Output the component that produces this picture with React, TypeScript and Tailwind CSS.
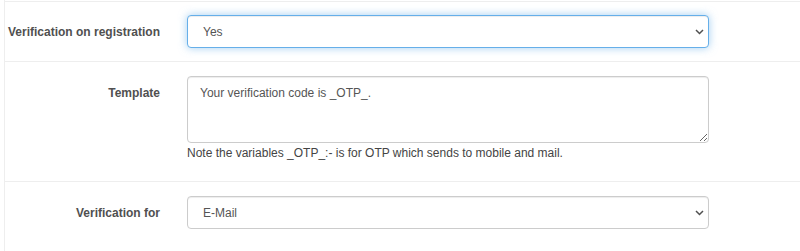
import React from 'react';

const font = { fontFamily: '"Liberation Sans", Arial, sans-serif' };

function Chevron() {
  return (
    <svg
      className="pointer-events-none absolute right-[5px] top-1/2 -translate-y-1/2"
      width="9"
      height="6"
      viewBox="0 0 9 6"
    >
      <polyline points="1,1 4.5,4.5 8,1" fill="none" stroke="#505050" strokeWidth="1.5" />
    </svg>
  );
}

function SelectBox({ value, focused }: { value: string; focused?: boolean }) {
  return (
    <div className="relative w-[522px]">
      <select
        defaultValue={value}
        className={`h-[33px] w-full appearance-none rounded-[4px] border bg-white pl-[15px] pr-8 text-[12px] text-[#555] outline-none ${
          focused
            ? 'border-[#66afe9] shadow-[inset_0_1px_1px_rgba(0,0,0,0.075),0_0_8px_rgba(102,175,233,0.6)]'
            : 'border-[#ccc] shadow-[inset_0_1px_1px_rgba(0,0,0,0.075)]'
        }`}
        style={font}
      >
        <option>{value}</option>
      </select>
      <Chevron />
    </div>
  );
}

export default function App() {
  return (
    <div className="h-[251px] w-[800px] overflow-hidden bg-white pl-[4px]" style={font}>
      <div className="h-full border-l border-[#eee]">
        <div className="h-[2px] border-b border-[#eee]" />

        <div className="flex h-[60px] items-center border-b border-[#eee]">
          <label className="w-[155px] pt-[1px] text-right text-[12px] font-bold text-[#505050]">
            Verification on registration
          </label>
          <div className="ml-[27px]">
            <SelectBox value="Yes" focused />
          </div>
        </div>

        <div className="flex h-[120px] border-b border-[#eee] pt-[14px]">
          <label className="w-[155px] pt-[9px] text-right text-[12px] font-bold leading-[17px] text-[#505050]">
            Template
          </label>
          <div className="ml-[27px] w-[522px]">
            <textarea
              defaultValue="Your verification code is _OTP_."
              className="block h-[67px] w-full rounded-[4px] border border-[#ccc] bg-white px-[12px] py-[8px] text-[12px] leading-[17px] text-[#555] shadow-[inset_0_1px_1px_rgba(0,0,0,0.075)] outline-none"
              style={font}
            />
            <p className="mt-[2px] text-[12px] leading-[17px] text-[#444]">
              Note the variables _OTP_:- is for OTP which sends to mobile and mail.
            </p>
          </div>
        </div>

        <div className="flex pt-[14px]">
          <label className="flex h-[33px] w-[155px] items-center justify-end pt-[1px] text-[12px] font-bold text-[#505050]">
            Verification for
          </label>
          <div className="ml-[27px]">
            <SelectBox value="E-Mail" />
          </div>
        </div>
      </div>
    </div>
  );
}
